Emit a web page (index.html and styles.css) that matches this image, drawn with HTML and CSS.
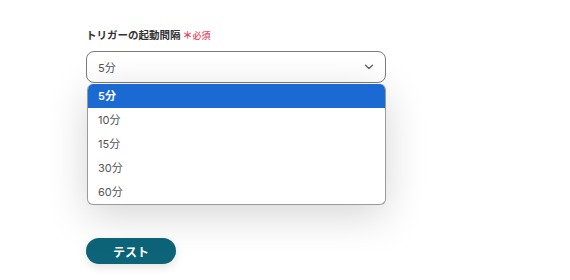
FILE: index.html
```html
<!DOCTYPE html>
<html lang="ja">
<head>
  <meta charset="UTF-8">
  <title>トリガーの起動間隔</title>
  <link rel="stylesheet" href="styles.css">
</head>
<body>
  <div class="form">
    <div class="field">
      <div class="field-label">トリガーの起動間隔<span class="required"><span class="star">＊</span>必須</span></div>
      <div class="select-wrap">
        <div class="select">
          <span>5分</span>
          <svg class="chevron" width="10" height="6" viewBox="0 0 10 6"><path d="M1.5 1.2 5 4.6 8.5 1.2" fill="none" stroke="#666" stroke-width="1.4" stroke-linecap="round" stroke-linejoin="round"/></svg>
        </div>
        <ul class="menu">
          <li class="active">5分</li>
          <li>10分</li>
          <li>15分</li>
          <li>30分</li>
          <li>60分</li>
        </ul>
      </div>
    </div>
    <div class="spacer"></div>
    <button class="test-btn">テスト</button>
  </div>
</body>
</html>
```

FILE: styles.css
```css
* {
  margin: 0;
  padding: 0;
  box-sizing: border-box;
}

body {
  font-family: Inter, "Noto Sans CJK JP", sans-serif;
  background: #fff;
  color: #333;
  width: 570px;
  height: 280px;
  overflow: hidden;
}

.form {
  padding: 27px 0 0 86px;
  display: flex;
  flex-direction: column;
  align-items: flex-start;
}

.field {
  width: 300px;
}

.field-label {
  font-size: 10.5px;
  font-weight: 700;
  color: #333;
  height: 17px;
  line-height: 17px;
  display: flex;
  align-items: center;
  gap: 2px;
}

.required {
  color: #e8425a;
  font-size: 9px;
  font-weight: 500;
  display: flex;
  align-items: center;
}

.star {
  font-size: 10px;
  font-weight: 700;
}

.select-wrap {
  position: relative;
  margin-top: 7px;
}

.select {
  height: 32px;
  border: 1px solid #7b7b7b;
  border-radius: 8px;
  padding: 0 10px 0 11px;
  display: flex;
  align-items: center;
  justify-content: space-between;
  font-size: 11px;
  color: #555;
  background: #fff;
}

.chevron {
  margin-right: 1px;
}

.menu {
  position: absolute;
  top: 33px;
  left: 1px;
  right: 0;
  list-style: none;
  background: #fff;
  border: 1px solid #9a9a9a;
  border-top: none;
  border-radius: 6px;
  overflow: hidden;
  box-shadow: 0 10px 40px rgba(0, 0, 0, 0.17);
  z-index: 2;
}

.menu li {
  height: 24px;
  line-height: 25px;
  padding-left: 10px;
  font-size: 11px;
  color: #555;
}

.menu li.active {
  background: #1b69d3;
  color: #fff;
  font-weight: 600;
}

.spacer {
  height: 155px;
}

.test-btn {
  width: 90px;
  height: 26px;
  border: none;
  border-radius: 13px;
  background: #0d6479;
  color: #fff;
  font-family: inherit;
  font-size: 12px;
  font-weight: 700;
  box-shadow: 0 3px 8px rgba(0, 0, 0, 0.12);
}
```
